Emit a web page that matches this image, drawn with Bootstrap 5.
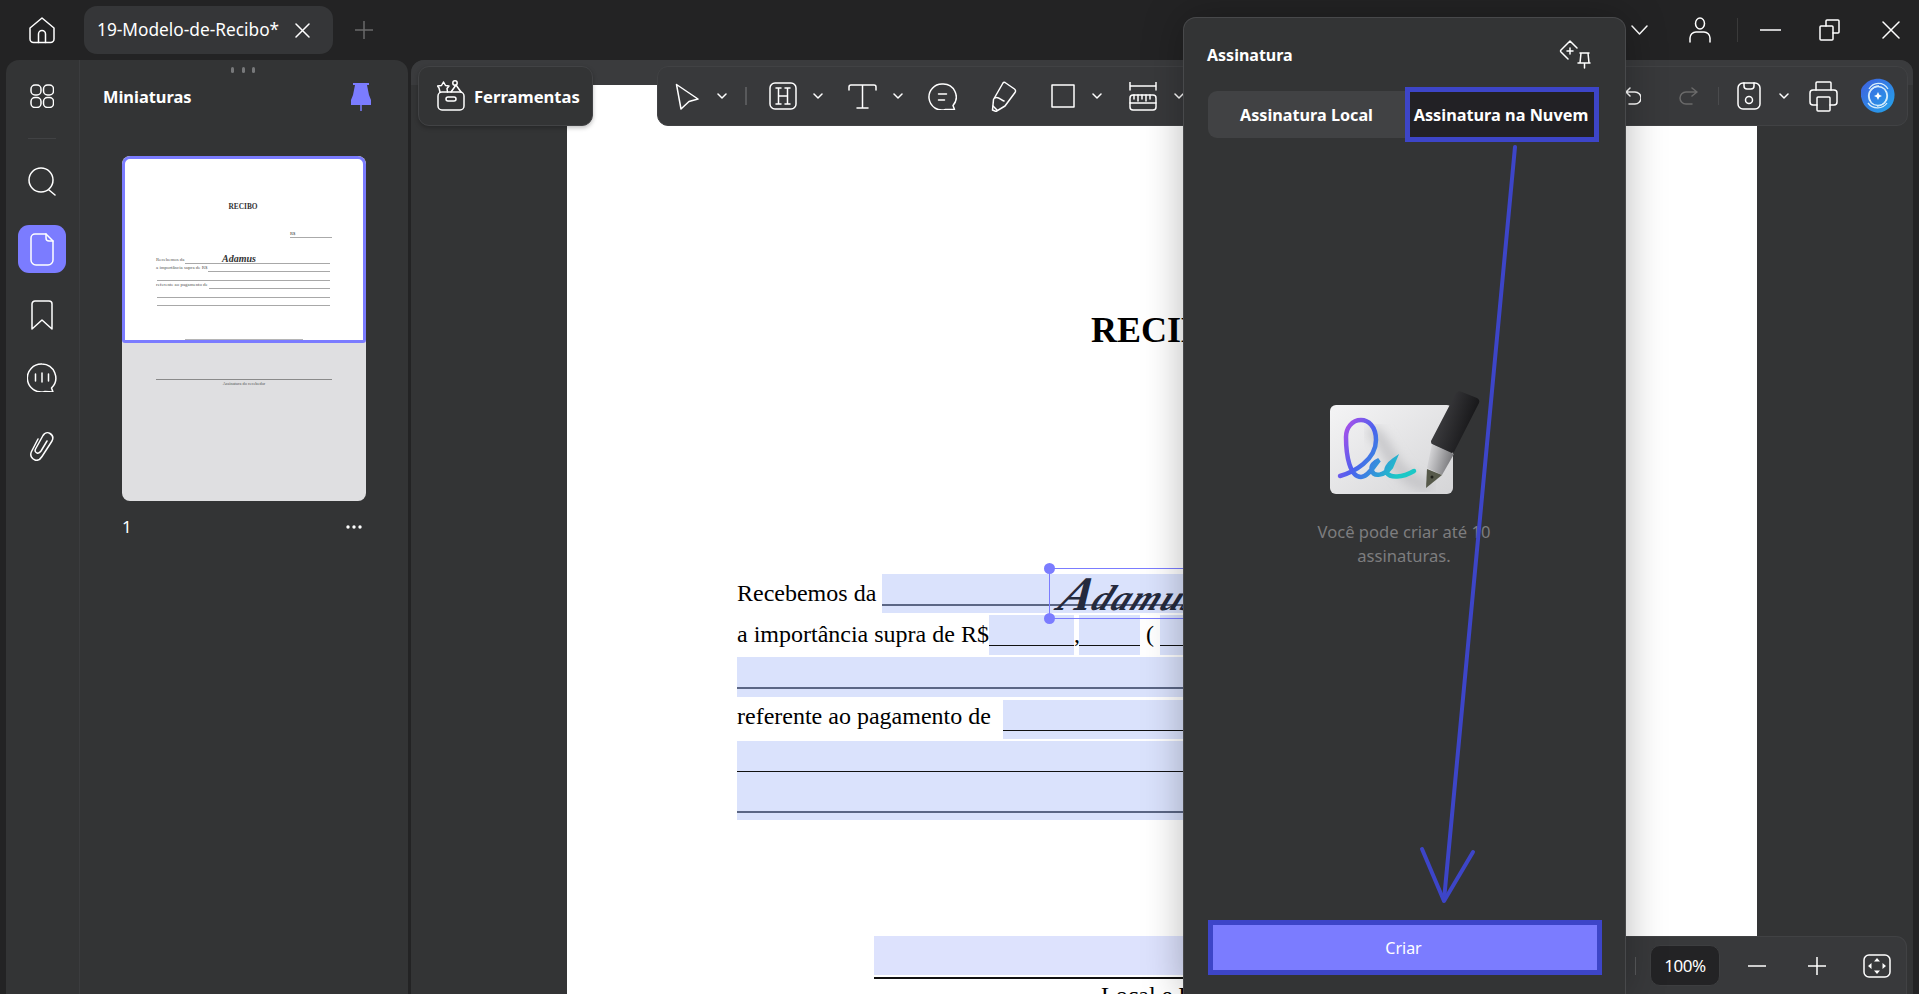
<!DOCTYPE html>
<html lang="pt">
<head>
<meta charset="utf-8">
<title>19-Modelo-de-Recibo</title>
<link href="https://cdn.jsdelivr.net/npm/bootstrap@5.3.0/dist/css/bootstrap.min.css" rel="stylesheet">
<style>
html,body{height:100%;margin:0;background:#232324;overflow:hidden}
body{font-family:"Noto Sans","Open Sans",sans-serif;color:#fff}
svg{display:block;flex:none}
.ic{fill:none;stroke:#fff;stroke-width:1.5;stroke-linecap:round;stroke-linejoin:round}
.ic-dim{stroke:#6a6a6a}
.app{width:1919px;height:994px}
.titlebar{height:60px;background:#232324}
.hm{margin-left:28px}
.doc-tab{width:249px;height:48px;margin-left:28px;background:#353638;border-radius:13px;padding-left:13px;font-size:17.300px}
.doc-tab svg{margin-left:16px}
.plus-ic{margin-left:22px}
.tr-chev{margin-left:auto}
.tr-user{margin-left:41px}
.tr-sep{width:1px;height:24px;background:#3a3a3a;margin-left:26px}
.tr-min{margin-left:22px}
.tr-res{margin-left:38px}
.tr-x{margin-left:42px;margin-right:19px}
.workspace{height:934px;padding-left:6px;padding-right:6px;gap:3px}
.sidebar{width:402px;background:#333435;border-radius:13px 13px 0 0}
.rail{width:74px;border-right:1px solid #3b3c3e;padding:24px 2px 0 0}
.rail-sep{width:28px;height:1px;background:#414244;margin:30px 0 28px}
.rail-active{width:48px;height:48px;background:#7b7cff;border-radius:11px;margin-top:29px}
.rail-b{margin-top:27px}
.rail-c{margin-top:32px}
.rail-d{margin-top:40px}
.thumbs{padding:0 0 0 42px;position:relative}
.drag-dots{width:24px;margin:7px 0 0 109px;height:4px}
.drag-dots i{width:3px;height:6px;border-radius:2px;background:#77787a;display:block}
.th-head{width:268px;margin-top:6px;margin-left:-19px;height:40px}
.th-title{font-size:16.400px;font-weight:700}
.thumb{width:244px;height:345px;margin-top:39px;background:#dfdfe1;border-radius:8px;overflow:hidden;color:#333;font-family:"Liberation Serif",serif}
.thumb-pg{height:187px;background:#fff;border:3px solid #7b7cff;border-radius:8px 8px 3px 3px;padding:0 33px 0 31px;overflow:hidden}
.t-head{font-size:7.400px;font-weight:700;line-height:8px;margin-top:44px;text-align:center;color:#333}
.t-rs{margin:19px -2px 0 auto;width:42px;height:8px;font-size:4.600px;line-height:7px;border-bottom:1px solid #aaa}
.t-row{height:8.500px;font-size:4.900px;line-height:8px;position:relative;color:#555}
.t-row span{white-space:nowrap}
.t-row b{flex:1;border-bottom:1px solid #a8a8a8;display:block;height:8px;margin-left:1px}
.t-first{margin-top:17.500px}
.t-sign{position:absolute;left:66px;top:-1px;font-size:10px;font-style:italic;font-weight:700;color:#333}
.t-last{height:1px;background:#b5b5b5;margin:32px 27px 0 29px}
.t-sub{padding:36px 34px 0;font-size:4.400px;line-height:6px;text-align:center;color:#555}
.t-sub hr{margin:0 0 1px;border:0;border-top:1px solid #8a8a8a;opacity:1}
.th-foot{width:240px;margin-top:16px;font-size:17px;line-height:20px}
.main-pane{background:#333435;border-radius:13px 13px 0 0;overflow:hidden;position:relative}
.pdf-page{width:1190px;height:909px;margin:0 auto;background:#fff;color:#000;font-family:"Liberation Serif",serif;font-size:24px;padding:225px 200px 0 170px}
.strip-wrap{position:absolute;inset:0 0 auto 0;height:25px;background:#3a3b3d;z-index:0}
.pdf-wrap{position:relative;z-index:1;padding-top:25px}
.recibo{font-size:36px;font-weight:700;line-height:40px;text-align:center;margin:0 -200px 224px -170px}
.dr{display:flex;align-items:center;position:relative;white-space:nowrap}
.dr>span{margin-bottom:2px}
.dr>.up-more{margin-bottom:7px}
.h39{height:39px}.h40{height:40px}
.mt2{margin-top:2px}.mt3{margin-top:3px}
.fld{background:#dae2fc linear-gradient(#111,#111) 0 30px/100% 1px no-repeat;height:100%}
.fld-thick{background:#dae2fc linear-gradient(#5b6685,#5b6685) 0 30px/100% 2px no-repeat}
.w-f1{margin-left:6px;flex:1}
.w-a{width:85px}.w-b{width:61px;margin-left:5px}.w-c{flex:1}
.w-d{flex:1;margin-left:12px}
.comma{width:0}
.paren{width:20px;text-align:center}
.selbox{position:absolute;z-index:2;left:312px;top:-6px;height:51px;width:500px;border:1px solid #7b7cff;border-right:0}
.sel-dot{position:absolute;width:11px;height:11px;border-radius:50%;background:#7b7cff;left:-6px}
.sel-t{top:-6px}.sel-b{bottom:-6px}
.sign-tx{position:absolute;left:12px;top:-1px;font-size:36px;line-height:52px;font-style:italic;font-weight:700;color:#252a3d;letter-spacing:1.500px;transform:skewX(-24deg);display:block}
.sign-tx::first-letter{font-size:48px}
.bot-wrap{margin:116px 0 0 137px;width:700px}
.bot-fld{height:39px;background:#dde2fd}
.bot-line{height:2px;background:#111;margin-top:2px}
.local{font-size:24px;line-height:28px;padding-left:227px;margin-top:2px}
.toolbar-f{position:absolute;left:7px;top:6px;width:175px;height:60px;background:#333435;border:1px solid #424345;border-radius:11px;z-index:3;font-size:16.600px;font-weight:700;padding-left:18px;gap:9px;box-shadow:0 2px 4px rgba(0,0,0,.25)}
.toolbar-f span{margin-top:2px}
.toolbar-f svg{margin-bottom:2px}
.toolbar-m{position:absolute;left:246px;top:6px;width:1251px;height:60px;background:#38393b;border:1px solid #414244;border-radius:11px;z-index:3;padding:0 12px 0 17px}
.g16{margin-left:16px}.g17{margin-left:17px}.g18{margin-left:18px}.g20{margin-left:20px}.g22{margin-left:22px}.g23{margin-left:23px}.g25{margin-left:25px}.g26{margin-left:26px}.g28{margin-left:28px}.g33{margin-left:33px}.g34{margin-left:34px}.g37{margin-left:37px}.g38{margin-left:38px}.g42{margin-left:42px}
.tb-sep{width:2px;height:18px;background:#58595b;margin-left:18px}
.tb-sep2{width:1px;height:18px;background:#4a4b4d;margin-left:20px}
.zoombar{position:absolute;left:1208px;bottom:0;width:288px;height:58px;background:#38393b;border:1px solid #414244;border-bottom:0;border-radius:0 11px 0 0;padding-left:33px;z-index:3}
.zb-sep{width:1px;height:18px;background:#58595b;margin-left:-18px;margin-right:14px}
.zb-val{width:70px;height:41px;background:#232325;border:1px solid #3d3e40;border-radius:10px;font-size:17px;letter-spacing:-.5px}
.sign-panel{position:absolute;left:1183px;top:17px;width:443px;height:977px;background:#333435;border:1px solid #48494b;border-bottom:0;border-radius:13px 13px 0 0;z-index:5;box-shadow:0 0 40px rgba(0,0,0,.28);padding:0 24px 19px 23px}
.sp-head{height:69px;padding:4px 10px 0 0}
.sp-title{font-size:16px;font-weight:700}
.sp-tabs{height:55px;margin:0 2px 0 1px}
.tab-local{width:197px;height:47px;background:#414244;color:#fff;font-size:16.200px;font-weight:700;border:0;border-radius:9px 0 0 9px;padding:2px 0 0}
.tab-cloud{width:194px;height:55px;background:#222125;color:#fff;font-size:16.300px;font-weight:700;border:5px solid #3d45c8;border-radius:0;padding:2px 2px 0 0;white-space:nowrap}
.sp-art{margin-top:248px;margin-left:2px}
.sp-note{margin-top:18px;font-size:16.600px;line-height:24px;color:#7d7d7f;text-align:center}
.btn-criar{margin:auto 0 0 1px;width:394px;height:55px;background:#7b7cff;border:5px solid #3d45c8;border-radius:0;color:#fff;font-size:16px;padding:0 3px 0 0}
.btn-criar:hover{background:#7b7cff;color:#fff;border-color:#3d45c8}
.annot{position:absolute;left:0;top:0;z-index:8;pointer-events:none}
</style>
</head>
<body>
<div class="app position-relative overflow-hidden d-flex flex-column">

  <header class="titlebar d-flex align-items-center">
    <svg class="ic hm" width="28" height="28" viewBox="0 0 28 28"><path d="M2 12 14 2l12 10v11a3.500 3.500 0 0 1-3.500 3.500h-17A3.500 3.500 0 0 1 2 23Z"/><path d="M10.500 26.500V18a3.500 3.500 0 0 1 7 0v8.500"/></svg>
    <div class="doc-tab d-flex align-items-center">
      <span>19-Modelo-de-Recibo*</span>
      <svg class="ic" width="15" height="15" viewBox="0 0 15 15"><path d="M1 1l13 13M14 1 1 14"/></svg>
    </div>
    <svg class="ic ic-dim plus-ic" width="18" height="18" viewBox="0 0 18 18"><path d="M9 0v18M0 9h18"/></svg>
    <svg class="ic tr-chev" width="17" height="10" viewBox="0 0 17 10"><path d="M1 1l7.500 8L16 1"/></svg>
    <svg class="ic tr-user" width="22" height="26" viewBox="0 0 22 26"><ellipse cx="11" cy="6.500" rx="4.500" ry="5.500"/><path d="M1 25v-4a6 6 0 0 1 6-6h8a6 6 0 0 1 6 6v4"/></svg>
    <div class="tr-sep"></div>
    <svg class="ic tr-min" width="21" height="2" viewBox="0 0 21 2"><path d="M0 1h21"/></svg>
    <svg class="ic tr-res" width="21" height="22" viewBox="0 0 21 22"><rect x="1" y="7" width="13" height="14" rx="1"/><path d="M7 7V2a1 1 0 0 1 1-1h11a1 1 0 0 1 1 1v11a1 1 0 0 1-1 1h-5"/></svg>
    <svg class="ic tr-x" width="18" height="18" viewBox="0 0 18 18"><path d="M1 1l16 16M17 1 1 17"/></svg>
  </header>

  <div class="workspace d-flex">
    <aside class="sidebar d-flex">
      <nav class="rail d-flex flex-column align-items-center">
        <svg class="ic" width="24" height="24" viewBox="0 0 24 24"><rect x="1" y="1" width="10" height="10" rx="4"/><rect x="13.500" y="1" width="10" height="10" rx="4"/><rect x="1" y="13.500" width="10" height="10" rx="4"/><rect x="13.500" y="13.500" width="10" height="10" rx="4"/></svg>
        <div class="rail-sep"></div>
        <svg class="ic" width="28" height="29" viewBox="0 0 28 29"><circle cx="13" cy="13" r="12"/><path d="M21 23l6 5"/></svg>
        <div class="rail-active d-flex align-items-center justify-content-center">
          <svg class="ic" width="24" height="33" viewBox="0 0 24 33"><path d="M5 1h11l7 7v19a5 5 0 0 1-5 5H6a5 5 0 0 1-5-5V5a4 4 0 0 1 4-4Z"/><path d="M16 1v4a3 3 0 0 0 3 3h4"/></svg>
        </div>
        <svg class="ic rail-b" width="22" height="31" viewBox="0 0 22 31"><path d="M4 1h14a3 3 0 0 1 3 3v25l-10-9-10 9V4a3 3 0 0 1 3-3Z"/></svg>
        <svg class="ic rail-c" width="30" height="29" viewBox="0 0 30 29"><path d="M15 1a14 14 0 1 0 3 27.500l8 .5-1.500-4A14 14 0 0 0 15 1Z"/><path d="M8.500 11v7M15 10v9M21.500 11v7"/></svg>
        <svg class="ic rail-d" width="25" height="29" viewBox="0 0 25 29"><path d="M9 7 2.500 19.500c-2 4 .5 7.500 3.500 8.500s5.500-1 7-3.500L23 9c1.500-3 .5-6-2-7.500s-5.500-.5-7 2L6.500 17c-1 2 0 3.500 1.500 4s3-.5 4-2L18 9"/></svg>
      </nav>
      <section class="thumbs d-flex flex-column">
        <div class="drag-dots d-flex justify-content-between"><i></i><i></i><i></i></div>
        <div class="th-head d-flex align-items-center justify-content-between">
          <span class="th-title">Miniaturas</span>
          <svg width="20" height="28" viewBox="0 0 20 28"><path fill="#7b7cff" d="M2 0h16v2h-2l2 10 2 5v5H0v-5l2-5 2-10H2Z"/><path stroke="#7b7cff" stroke-width="1.500" d="M10 21v7"/></svg>
        </div>
        <div class="thumb">
          <div class="thumb-pg">
            <div class="t-head">RECIBO</div>
            <div class="t-rs">R$</div>
            <div class="t-row t-first d-flex"><span>Recebemos da</span><b></b><em class="t-sign">Adamus</em></div>
            <div class="t-row d-flex"><span>a importância supra de R$</span><b></b></div>
            <div class="t-row d-flex"><b></b></div>
            <div class="t-row d-flex"><span>referente ao pagamento de</span><b></b></div>
            <div class="t-row d-flex"><b></b></div>
            <div class="t-row d-flex"><b></b></div>
            <div class="t-last"></div>
          </div>
          <div class="t-sub"><hr>Assinatura do recebedor</div>
        </div>
        <div class="th-foot d-flex justify-content-between align-items-center">
          <span>1</span>
          <svg width="16" height="4" viewBox="0 0 16 4" fill="#fff"><circle cx="2" cy="2" r="1.700"/><circle cx="8" cy="2" r="1.700"/><circle cx="14" cy="2" r="1.700"/></svg>
        </div>
      </section>
    </aside>

    <main class="main-pane flex-grow-1">
      <div class="strip-wrap"></div>
      <div class="pdf-wrap">
        <article class="pdf-page">
          <div class="recibo">RECIBO</div>
          <div class="dr h39">
            <span>Recebemos da</span>
            <div class="fld fld-thick w-f1"></div>
            <div class="selbox">
              <i class="sel-dot sel-t"></i><i class="sel-dot sel-b"></i>
              <em class="sign-tx">Adamus</em>
            </div>
          </div>
          <div class="dr h40 mt2">
            <span>a importância supra de R$</span>
            <div class="fld w-a"></div><span class="comma">,</span>
            <div class="fld w-b"></div><span class="paren">(</span>
            <div class="fld w-c"></div>
          </div>
          <div class="dr h40 mt2"><div class="fld fld-thick flex-grow-1"></div></div>
          <div class="dr h39 mt3"><span class="up-more">referente ao pagamento de</span><div class="fld w-d"></div></div>
          <div class="dr h40 mt2"><div class="fld flex-grow-1"></div></div>
          <div class="dr h39"><div class="fld fld-thick flex-grow-1"></div></div>
          <div class="bot-wrap">
            <div class="bot-fld"></div>
            <div class="bot-line"></div>
            <div class="local">Local e Data</div>
          </div>
        </article>
      </div>

      <div class="toolbar-f d-flex align-items-center">
        <svg class="ic" width="28" height="31" viewBox="0 0 28 31"><rect x="1" y="12" width="26" height="18" rx="4"/><rect x="9" y="17" width="10" height="4" rx="2"/><path d="M3 12 2 8l-1.500-2 4-.5L6.500 2l2 3.500 3.500.5-2 2.500.5 3.500M14 12l5-7 5 7"/><circle cx="18" cy="3" r="2.200"/></svg>
        <span>Ferramentas</span>
      </div>

      <div class="toolbar-m d-flex align-items-center">
        <svg class="ic" width="24" height="27" viewBox="0 0 24 27"><path d="M1.500 1.500 23 16l-9 2.500L6 26Z"/></svg>
        <svg class="ic g18" width="10" height="6" viewBox="0 0 10 6"><path d="M1 1l4 4 4-4"/></svg>
        <div class="tb-sep"></div>
        <svg class="ic g22" width="28" height="28" viewBox="0 0 28 28"><rect x="1" y="1" width="26" height="26" rx="5"/><path d="M7 6h5M16 6h5M7 22h5M16 22h5M9.500 6v16M18.500 6v16M9.500 14h9"/></svg>
        <svg class="ic g16" width="10" height="6" viewBox="0 0 10 6"><path d="M1 1l4 4 4-4"/></svg>
        <svg class="ic g25" width="29" height="25" viewBox="0 0 29 25"><path d="M1 6V3a2 2 0 0 1 2-2h23a2 2 0 0 1 2 2v3M14.500 1v23M9 24h11"/></svg>
        <svg class="ic g16" width="10" height="6" viewBox="0 0 10 6"><path d="M1 1l4 4 4-4"/></svg>
        <svg class="ic g25" width="29" height="27" viewBox="0 0 29 27"><path d="M14.500 1a13 13 0 1 0 3 25.500l9 0-1.500-4A13 13 0 0 0 14.500 1Z"/><path d="M10.500 11h8M10.500 17h6"/></svg>
        <svg class="ic g34" width="26" height="31" viewBox="0 0 26 31"><path d="M14 1.500l9.500 6.500a2.500 2.500 0 0 1 .5 3.500L14 25 5 30.500 1.500 29l1-10.500L12 2a1.500 1.500 0 0 1 2-.5Z"/><path d="M4 17c3-2 6 2 9 3M2 25l4 4"/></svg>
        <svg class="ic g34" width="24" height="24" viewBox="0 0 24 24"><rect x="1" y="1" width="22" height="22"/></svg>
        <svg class="ic g17" width="10" height="6" viewBox="0 0 10 6"><path d="M1 1l4 4 4-4"/></svg>
        <svg class="ic g26" width="30" height="29" viewBox="0 0 30 29"><path d="M2 0v8M28 0v8M2 4h26"/><rect x="2" y="13" width="26" height="15" rx="3"/><path d="M6 13v4M10 13v6M14 13v4M18 13v6M22 13v4M2 21h26"/></svg>
        <svg class="ic g16" width="10" height="6" viewBox="0 0 10 6"><path d="M1 1l4 4 4-4"/></svg>
        <div class="ms-auto d-flex align-items-center">
          <svg class="ic" width="16" height="18" viewBox="0 0 16 18"><path d="M5 1 1 5l4 4M1 5h9a5 5 0 0 1 0 12H4"/></svg>
          <svg class="ic ic-dim g38" width="19" height="18" viewBox="0 0 19 18"><path d="M13 1l5 4-5 4M18 5H7a5.500 5.500 0 0 0 0 12h6"/></svg>
          <div class="tb-sep2"></div>
          <svg class="ic g18" width="24" height="28" viewBox="0 0 24 28"><rect x="1" y="1" width="22" height="26" rx="5"/><path d="M7 1v3a3 3 0 0 0 3 3h4a3 3 0 0 0 3-3V1"/><circle cx="12" cy="18" r="3.500"/></svg>
          <svg class="ic g18" width="10" height="6" viewBox="0 0 10 6"><path d="M1 1l4 4 4-4"/></svg>
          <svg class="ic g20" width="29" height="31" viewBox="0 0 29 31"><path d="M7 9V2a1 1 0 0 1 1-1h13a1 1 0 0 1 1 1v7"/><path d="M8 24H4a3 3 0 0 1-3-3v-9a3 3 0 0 1 3-3h21a3 3 0 0 1 3 3v9a3 3 0 0 1-3 3h-4"/><rect x="8" y="16" width="13" height="14" rx="1"/></svg>
          <svg class="g23" width="34" height="36" viewBox="0 0 34 36"><defs><linearGradient id="aig" x1="0" y1="0" x2="1" y2="1"><stop offset="0" stop-color="#3f5fe0"/><stop offset="1" stop-color="#23a6ea"/></linearGradient></defs><path fill="url(#aig)" d="M14 1c6-1 13 1 17 7s3 15-1 20-11 8-17 6S3 28 1 22-1 11 3 7s6-5 11-6Z"/><g fill="none" stroke="#d6ecfb" stroke-width="1.300"><circle cx="17" cy="18" r="9.500"/><path d="M8 11c4-7 14-8 19 0M26 25c-4 6-14 7-19 0M10 24c-5-8 1-16 8-16M24 12c5 8-1 16-8 16"/></g><path fill="#fff" d="M17 14l1.300 2.700L21 18l-2.700 1.300L17 22l-1.300-2.700L13 18l2.700-1.300Z"/></svg>
        </div>
      </div>

      <div class="zoombar d-flex align-items-center">
        <div class="zb-sep"></div>
        <div class="zb-val d-flex align-items-center justify-content-center">100%</div>
        <svg class="ic g28" width="18" height="2" viewBox="0 0 18 2"><path d="M0 1h18"/></svg>
        <svg class="ic g42" width="18" height="18" viewBox="0 0 18 18"><path d="M9 0v18M0 9h18"/></svg>
        <svg class="ic g37" width="28" height="24" viewBox="0 0 28 24"><rect x="1" y="1" width="26" height="22" rx="5"/><path fill="#fff" stroke="none" d="M14 4l3 3.500h-6ZM14 20l3-3.500h-6ZM5 12l3.500-3v6ZM23 12l-3.500-3v6Z"/></svg>
      </div>
    </main>
  </div>

  <section class="sign-panel d-flex flex-column">
    <div class="sp-head d-flex align-items-center justify-content-between">
      <span class="sp-title">Assinatura</span>
      <svg class="ic" width="32" height="29" viewBox="0 0 32 29"><path d="M11 1 2 10a1.500 1.500 0 0 0 0 2l7 7M11 1l7 7M8 11h6M11 8v6"/><path d="M21 13h9M22 13l-1 10h9l-1-10M25.500 23v5M19 23h12"/></svg>
    </div>
    <div class="sp-tabs d-flex align-items-center">
      <button class="btn tab-local" type="button">Assinatura Local</button>
      <button class="btn tab-cloud" type="button">Assinatura na Nuvem</button>
    </div>
    <svg class="sp-art align-self-center" width="150" height="112" viewBox="0 0 150 112">
      <defs>
        <linearGradient id="cardg" x1="0" y1="0" x2="1" y2="1"><stop offset="0" stop-color="#f4f4f5"/><stop offset="1" stop-color="#d5d5d7"/></linearGradient>
        <linearGradient id="inkg" x1="0" y1="0" x2="1" y2=".4"><stop offset="0" stop-color="#c04ce8"/><stop offset=".45" stop-color="#4b62ee"/><stop offset="1" stop-color="#1bc8c6"/></linearGradient>
        <linearGradient id="peng" x1="0" y1="0" x2="1" y2=".4"><stop offset="0" stop-color="#4b4b4e"/><stop offset="1" stop-color="#131315"/></linearGradient>
        <linearGradient id="silg" x1="0" y1="0" x2="1" y2=".3"><stop offset="0" stop-color="#e8e8ea"/><stop offset="1" stop-color="#77777a"/></linearGradient>
        <filter id="soft"><feGaussianBlur stdDeviation="6"/></filter>
      </defs>
      <rect x="0" y="15" width="123" height="89" rx="6" fill="url(#cardg)"/>
      <path fill="none" stroke="#bfbfc2" stroke-width="10" filter="url(#soft)" d="M40 40C60 50 60 90 100 96"/>
      <path fill="none" stroke="url(#inkg)" stroke-width="4.500" stroke-linecap="round" d="M10 86C24 82 46 70 46 50 46 36 38 30 31 30 22 30 16 38 16 47 16 66 20 87 31 87 38 87 44 76 49 70 44 72 40 76 42 81 44 87 54 86 61 77L64 70C58 74 55 80 57 83 60 88 72 88 84 81"/>
      <path fill="url(#peng)" d="M126 3c2-2 4-2 6-1l15 6c2 1 3 3 2 5l-25 49c-1 1-3 1-4 1l-17-8c-2-1-2-3-2-4Z"/>
      <path fill="url(#silg)" d="M102 54l22 10-12 21-15-7Z"/>
      <path fill="#56594a" d="M97 79l15 6-16 13Z"/>
      <circle cx="102" cy="87" r="1.500" fill="#1f201a"/>
    </svg>
    <p class="sp-note">Você pode criar até 10<br>assinaturas.</p>
    <button class="btn btn-criar d-flex align-items-center justify-content-center" type="button">Criar</button>
  </section>

  <svg class="annot" width="1919" height="994" viewBox="0 0 1919 994" fill="none" stroke="#3d45c8" stroke-width="4" stroke-linecap="round" stroke-linejoin="round">
    <path d="M1515 147 1444 900"/>
    <path d="M1422 849 1444 901 1473 852"/>
  </svg>
</div>
<script src="https://cdn.jsdelivr.net/npm/bootstrap@5.3.0/dist/js/bootstrap.bundle.min.js"></script>
</body>
</html>
